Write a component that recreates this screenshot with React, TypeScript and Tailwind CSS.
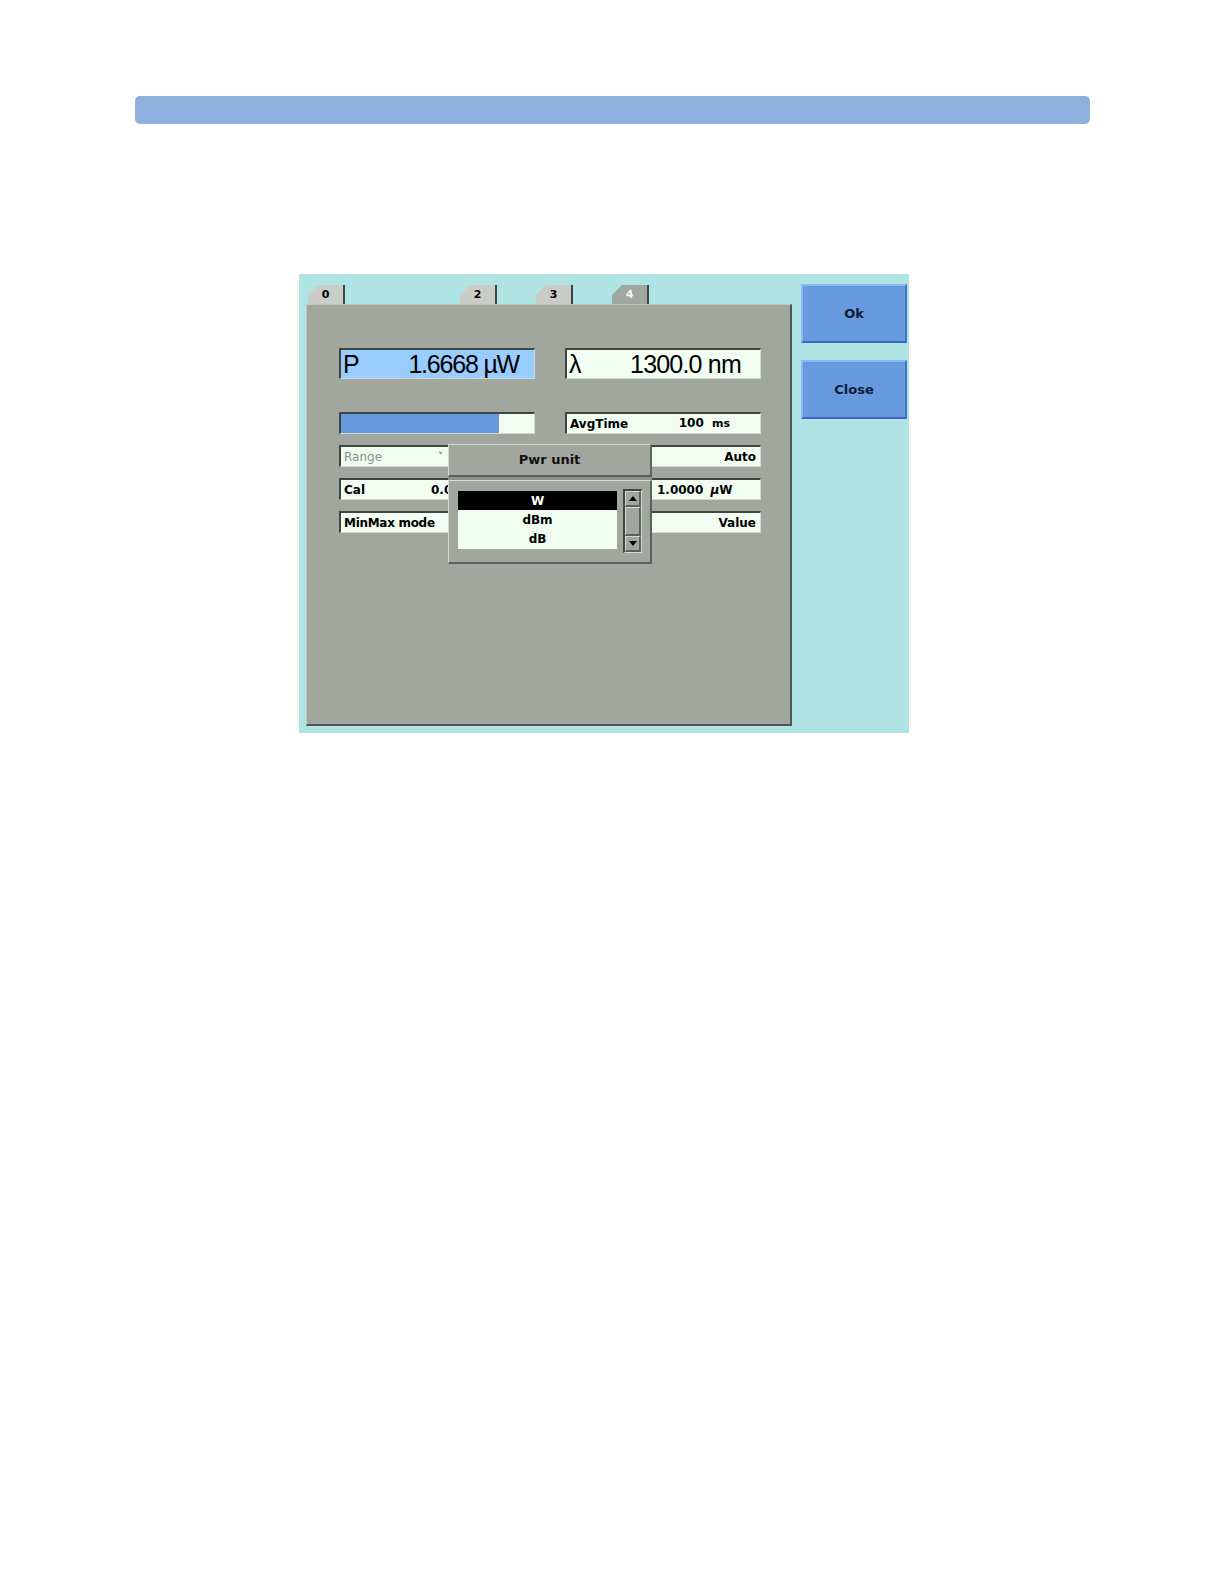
const font = { fontFamily: '"DejaVu Sans", Verdana, sans-serif' };
const bigFont = { fontFamily: '"Liberation Sans", Arial, sans-serif' };

const sunken =
  "border-t-2 border-l-2 border-b border-r border-t-[#3f4541] border-l-[#3f4541] border-b-[#d4d8d2] border-r-[#d4d8d2]";
const raised =
  "border-t border-l border-b-2 border-r-2 border-t-[#d6dad4] border-l-[#d6dad4] border-b-[#5b615c] border-r-[#5b615c]";

function Tab({ label, active, hidden }: { label: string; active?: boolean; hidden?: boolean }) {
  return (
    <div className="w-[76px] shrink-0">
      {!hidden && (
        <div
          className={`ml-[2px] flex h-[19px] w-[37px] items-end justify-center border-r-2 border-r-[#3d4440] pb-[1px] text-[11px] font-bold [clip-path:polygon(10px_0,100%_0,100%_100%,0_100%,0_10px)] ${
            active ? "bg-[#a1a79f] text-[#f4f6f4]" : "bg-[#c9cdc6] text-black"
          }`}
          style={font}
        >
          {label}
        </div>
      )}
    </div>
  );
}

function Field({ children, className = "" }: { children: React.ReactNode; className?: string }) {
  return (
    <div
      className={`flex h-[22px] items-center bg-[#f1fdf1] px-[3px] text-[12px] font-bold text-black ${sunken} ${className}`}
      style={font}
    >
      {children}
    </div>
  );
}

function Button({ label }: { label: string }) {
  return (
    <div
      className="flex h-[59px] w-[106px] items-center justify-center border-2 border-t-[#8cb8f4] border-l-[#8cb8f4] border-b-[#3f66c4] border-r-[#4a72cc] bg-[#6699dd] text-[13px] font-bold text-[#0e1c36]"
      style={font}
    >
      {label}
    </div>
  );
}

function PwrUnitPopup() {
  return (
    <div className="absolute left-[141px] top-[139px] w-[204px] bg-[#8c928b]">
      <div
        className={`flex h-[33px] items-center justify-center bg-[#a1a79f] text-[13px] font-bold text-[#111] ${raised}`}
        style={font}
      >
        Pwr unit
      </div>
      <div className={`mt-[3px] flex h-[84px] gap-[6px] bg-[#a1a79f] pl-[9px] pt-[10px] ${raised}`}>
        <div className="flex h-[58px] w-[159px] flex-col bg-[#f1fdf1] text-[12px] font-bold" style={font}>
          <div className="flex h-[19px] items-center justify-center bg-black text-white">W</div>
          <div className="flex h-[19px] items-center justify-center text-black">dBm</div>
          <div className="flex h-[20px] items-center justify-center text-black">dB</div>
        </div>
        <div className={`-mt-[2px] flex h-[64px] w-[19px] flex-col bg-[#a1a79f] ${sunken} border-t border-l`}>
          <div className={`flex h-[16px] items-center justify-center ${raised}`}>
            <svg width="8" height="5" viewBox="0 0 8 5">
              <path d="M0 5 L4 0 L8 5 Z" fill="#000" />
            </svg>
          </div>
          <div className={`flex-1 ${raised}`} />
          <div className={`flex h-[16px] items-center justify-center ${raised}`}>
            <svg width="8" height="5" viewBox="0 0 8 5">
              <path d="M0 0 L8 0 L4 5 Z" fill="#000" />
            </svg>
          </div>
        </div>
      </div>
    </div>
  );
}

function Panel() {
  return (
    <div className="relative h-[422px] w-[486px] border-t border-l border-b-2 border-r-2 border-t-[#c3c8c1] border-l-[#c3c8c1] border-b-[#505854] border-r-[#505854] bg-[#a1a79f] pl-[32px] pt-[43px]">
      <div className="grid grid-cols-[196px_196px] gap-x-[30px]">
        <div
          className={`flex h-[31px] items-center justify-between bg-[#99ccff] pl-[2px] pr-[15px] text-[25px] leading-none text-black ${sunken}`}
          style={bigFont}
        >
          <span>P</span>
          <span className="tracking-[-1.2px]">1.6668 µW</span>
        </div>
        <div
          className={`flex h-[31px] items-center justify-between bg-[#f1fdf1] pl-[2px] pr-[19px] text-[25px] leading-none text-black ${sunken}`}
          style={bigFont}
        >
          <span>λ</span>
          <span className="tracking-[-0.8px]">1300.0 nm</span>
        </div>
      </div>

      <div className="mt-[33px] grid grid-cols-[196px_196px] gap-x-[30px] gap-y-[11px]">
        <div className={`h-[22px] bg-[#f1fdf1] ${sunken}`}>
          <div className="h-full w-[82%] bg-[#6699dd]" />
        </div>
        <Field className="h-[21px]">
          <span>AvgTime</span>
          <span className="ml-auto pr-[27px]">
            100 <span className="ml-[4px] text-[11px]">ms</span>
          </span>
        </Field>

        <Field>
          <span className="font-normal text-[#8a908b]">Range</span>
          <span className="ml-auto pr-[88px] text-[10px] font-normal text-[#555]">˅</span>
        </Field>
        <Field>
          <span className="ml-auto pr-[1px]">Auto</span>
        </Field>

        <Field>
          <span className="w-[87px]">Cal</span>
          <span>0.000 dB</span>
        </Field>
        <Field>
          <span className="pl-[87px]">
            1.0000 <span className="ml-[3px] italic">µ</span>W
          </span>
        </Field>

        <Field>
          <span className="tracking-[-0.3px]">MinMax mode</span>
        </Field>
        <Field>
          <span className="ml-auto pr-[1px]">Value</span>
        </Field>
      </div>

      <PwrUnitPopup />
    </div>
  );
}

export default function App() {
  return (
    <div className="bg-white pt-[96px] pb-[40px]">
      <div className="ml-[135px] h-[28px] w-[955px] rounded-[5px] bg-[#8fb0de]" />

      <div className="ml-[299px] mt-[150px] flex h-[459px] w-[610px] bg-[#b0e4e4]">
        <div className="pl-[7px] pt-[11px]">
          <div className="flex h-[19px]">
            <Tab label="0" />
            <Tab label="1" hidden />
            <Tab label="2" />
            <Tab label="3" />
            <Tab label="4" active />
          </div>
          <Panel />
        </div>
        <div className="ml-[9px] flex flex-col gap-[17px] pt-[10px]">
          <Button label="Ok" />
          <Button label="Close" />
        </div>
      </div>
    </div>
  );
}
